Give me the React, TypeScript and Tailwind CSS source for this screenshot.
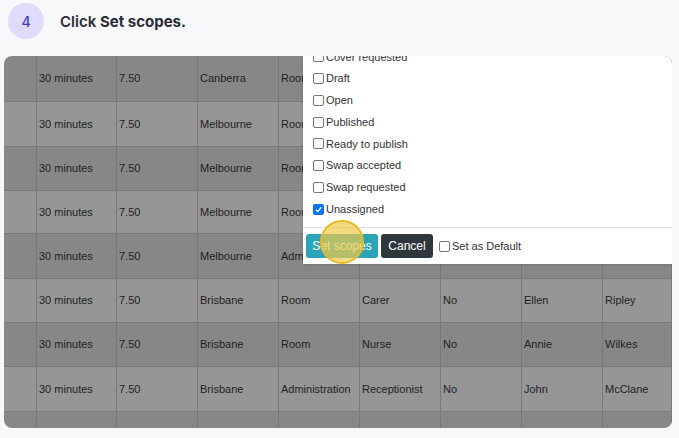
const widths = ["w-[33px]", "w-[80px]", "w-[81px]", "w-[81px]", "w-[81px]", "w-[81px]", "w-[81px]", "w-[81px]", "flex-1"];

// rows 1-5 sit under the popup from column 5 on, so those cells stay empty
const rows: { h: string; dark: boolean; cells: string[] }[] = [
  { h: "h-[46px]", dark: true, cells: ["", "30 minutes", "7.50", "Canberra", "Room", "", "", "", ""] },
  { h: "h-[45px]", dark: false, cells: ["", "30 minutes", "7.50", "Melbourne", "Room", "", "", "", ""] },
  { h: "h-[44px]", dark: true, cells: ["", "30 minutes", "7.50", "Melbourne", "Room", "", "", "", ""] },
  { h: "h-[43px]", dark: false, cells: ["", "30 minutes", "7.50", "Melbourne", "Room", "", "", "", ""] },
  { h: "h-[45px]", dark: true, cells: ["", "30 minutes", "7.50", "Melbourne", "Administration", "", "", "", ""] },
  { h: "h-[44px]", dark: false, cells: ["", "30 minutes", "7.50", "Brisbane", "Room", "Carer", "No", "Ellen", "Ripley"] },
  { h: "h-[44px]", dark: true, cells: ["", "30 minutes", "7.50", "Brisbane", "Room", "Nurse", "No", "Annie", "Wilkes"] },
  { h: "h-[45px]", dark: false, cells: ["", "30 minutes", "7.50", "Brisbane", "Administration", "Receptionist", "No", "John", "McClane"] },
  { h: "h-[20px]", dark: true, cells: ["", "", "", "", "", "", "", "", ""] },
];

const scopes = [
  { label: "Cover requested", checked: false },
  { label: "Draft", checked: false },
  { label: "Open", checked: false },
  { label: "Published", checked: false },
  { label: "Ready to publish", checked: false },
  { label: "Swap accepted", checked: false },
  { label: "Swap requested", checked: false },
  { label: "Unassigned", checked: true },
];

function Box({ checked }: { checked?: boolean }) {
  return checked ? (
    <span className="flex h-[11px] w-[11px] shrink-0 items-center justify-center rounded-[2px] bg-[#0b75f0]">
      <svg viewBox="0 0 12 12" className="h-[9px] w-[9px]">
        <path d="M2.5 6.3 L5 8.8 L9.6 3.2" fill="none" stroke="white" strokeWidth="1.8" />
      </svg>
    </span>
  ) : (
    <span className="h-[11px] w-[11px] shrink-0 rounded-[2px] border border-[#767676] bg-white" />
  );
}

export default function App() {
  return (
    <div className="h-[438px] w-[679px] overflow-hidden bg-[#f7f8fa] font-['Inter',sans-serif]">
      {/* Step header */}
      <div className="flex h-[56px] items-start pl-[8px] pt-[3px]">
        <div className="flex h-[36px] w-[36px] items-center justify-center rounded-full bg-[#dedcfa] text-[14px] font-medium text-[#4338ca]">
          4
        </div>
        <div className="ml-[16px] mt-[8px] text-[15px] font-semibold text-[#2b2b38]">
          Click <span className="font-bold">Set scopes.</span>
        </div>
      </div>

      {/* Screenshot card */}
      <div className="relative ml-[4px] h-[372px] w-[668px] overflow-hidden rounded-[8px] font-['Liberation_Sans',Arial,sans-serif] text-[11px] text-[#222]">
        {rows.map((r, i) => (
          <div key={i} className={`flex ${r.h} border-b border-[#7a7a7a] ${r.dark ? "bg-[#878787]" : "bg-[#969696]"}`}>
            {r.cells.map((c, j) => (
              <div key={j} className={`${widths[j]} flex items-center border-r border-[#787878] pl-[2px] whitespace-nowrap overflow-hidden`}>
                {c}
              </div>
            ))}
          </div>
        ))}

        {/* Scopes popup */}
        <div className="absolute left-[299px] top-0 right-0 h-[208px] bg-white text-[#333] shadow-[0_1px_3px_rgba(0,0,0,0.15)]">
          <div className="h-[166px] overflow-hidden">
            <div className="-mt-[10px]">
              {scopes.map((s) => (
                <div key={s.label} className="flex h-[21.75px] items-center gap-[2px] pl-[10px]">
                  <Box checked={s.checked} />
                  <span>{s.label}</span>
                </div>
              ))}
            </div>
          </div>
          <div className="mt-[5px] border-t border-[#dcdcdc]" />
          <div className="mt-[6px] flex items-center pl-[3px] text-[12px]">
            <button className="h-[24px] w-[72px] rounded-[3px] bg-[#2aa4b6] text-white">Set scopes</button>
            <button className="ml-[3px] h-[24px] w-[52px] rounded-[3px] bg-[#30373c] text-white">Cancel</button>
            <span className="ml-[6px] flex items-center gap-[2px] text-[11px]">
              <Box />
              Set as Default
            </span>
          </div>
        </div>

        {/* Click highlight */}
        <div className="absolute left-[316px] top-[164px] h-[44px] w-[44px] rounded-full border-2 border-[#e9b824] bg-[#f0c94a]/70" />
      </div>
    </div>
  );
}
